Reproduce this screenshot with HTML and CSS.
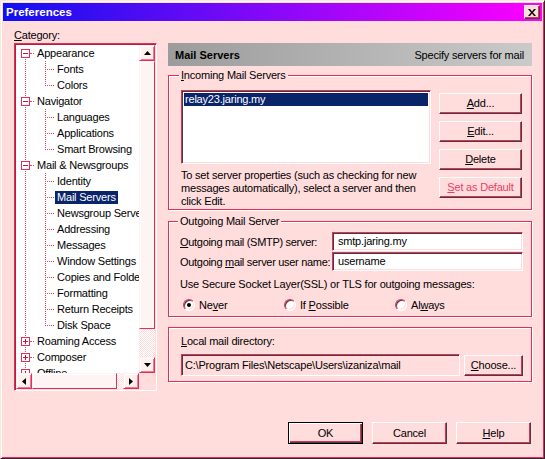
FILE: index.html
```html
<!DOCTYPE html>
<html>
<head>
<meta charset="utf-8">
<link rel="stylesheet" href="styles.css">
</head>
<body>
<div class="window">
  <div class="titlebar">
    <span class="title">Preferences</span>
    <span class="close"><svg width="8" height="7" viewBox="0 0 8 7"><path d="M0 0h2l2 2.5L6 0h2L5 3.5 8 7H6L4 4.5 2 7H0l3-3.5z" fill="#000"/></svg></span>
  </div>
  <div class="main">
    <div class="left">
      <div class="cat-label"><u>C</u>ategory:</div>
      <div class="tree">
        <div class="tree-content">
          <div class="row top"><span class="pad"></span><svg class="box" width="9" height="9"><rect x="0.5" y="0.5" width="8" height="8" fill="#fff" stroke="#e03058"/><path d="M2 4.5h5" stroke="#c01838"/></svg><span class="hl"></span><span class="label">Appearance</span></div>
          <div class="row child"><span class="indent"></span><span class="guide"></span><span class="label">Fonts</span></div>
          <div class="row child"><span class="indent"></span><span class="guide last"></span><span class="label">Colors</span></div>
          <div class="row top"><span class="pad"></span><svg class="box" width="9" height="9"><rect x="0.5" y="0.5" width="8" height="8" fill="#fff" stroke="#e03058"/><path d="M2 4.5h5" stroke="#c01838"/></svg><span class="hl"></span><span class="label">Navigator</span></div>
          <div class="row child"><span class="indent"></span><span class="guide"></span><span class="label">Languages</span></div>
          <div class="row child"><span class="indent"></span><span class="guide"></span><span class="label">Applications</span></div>
          <div class="row child"><span class="indent"></span><span class="guide last"></span><span class="label">Smart Browsing</span></div>
          <div class="row top"><span class="pad"></span><svg class="box" width="9" height="9"><rect x="0.5" y="0.5" width="8" height="8" fill="#fff" stroke="#e03058"/><path d="M2 4.5h5" stroke="#c01838"/></svg><span class="hl"></span><span class="label">Mail &amp; Newsgroups</span></div>
          <div class="row child"><span class="indent"></span><span class="guide"></span><span class="label">Identity</span></div>
          <div class="row child"><span class="indent"></span><span class="guide"></span><span class="label sel">Mail Servers</span></div>
          <div class="row child"><span class="indent"></span><span class="guide"></span><span class="label">Newsgroup Servers</span></div>
          <div class="row child"><span class="indent"></span><span class="guide"></span><span class="label">Addressing</span></div>
          <div class="row child"><span class="indent"></span><span class="guide"></span><span class="label">Messages</span></div>
          <div class="row child"><span class="indent"></span><span class="guide"></span><span class="label">Window Settings</span></div>
          <div class="row child"><span class="indent"></span><span class="guide"></span><span class="label">Copies and Folders</span></div>
          <div class="row child"><span class="indent"></span><span class="guide"></span><span class="label">Formatting</span></div>
          <div class="row child"><span class="indent"></span><span class="guide"></span><span class="label">Return Receipts</span></div>
          <div class="row child"><span class="indent"></span><span class="guide last"></span><span class="label">Disk Space</span></div>
          <div class="row top"><span class="pad"></span><svg class="box" width="9" height="9"><rect x="0.5" y="0.5" width="8" height="8" fill="#fff" stroke="#e03058"/><path d="M2 4.5h5M4.5 2v5" stroke="#c01838"/></svg><span class="hl"></span><span class="label">Roaming Access</span></div>
          <div class="row top"><span class="pad"></span><svg class="box" width="9" height="9"><rect x="0.5" y="0.5" width="8" height="8" fill="#fff" stroke="#e03058"/><path d="M2 4.5h5M4.5 2v5" stroke="#c01838"/></svg><span class="hl"></span><span class="label">Composer</span></div>
          <div class="row top"><span class="pad"></span><svg class="box" width="9" height="9"><rect x="0.5" y="0.5" width="8" height="8" fill="#fff" stroke="#e03058"/><path d="M2 4.5h5M4.5 2v5" stroke="#c01838"/></svg><span class="hl"></span><span class="label">Offline</span></div>
        </div>
        <div class="vscroll">
          <div class="sb-btn"><svg width="7" height="4"><path d="M3.5 0L7 4H0z" fill="#000"/></svg></div>
          <div class="thumb vthumb"></div>
          <div class="track"></div>
          <div class="sb-btn"><svg width="7" height="4"><path d="M0 0h7L3.5 4z" fill="#000"/></svg></div>
        </div>
        <div class="hscroll">
          <div class="sb-btn"><svg width="4" height="7"><path d="M4 0v7L0 3.5z" fill="#000"/></svg></div>
          <div class="thumb hthumb"></div>
          <div class="track"></div>
          <div class="sb-btn"><svg width="4" height="7"><path d="M0 0l4 3.5L0 7z" fill="#000"/></svg></div>
        </div>
        <div class="corner"></div>
      </div>
    </div>

    <div class="right">
      <div class="header"><span class="h-title">Mail Servers</span><span class="h-desc">Specify servers for mail</span></div>

      <div class="group incoming">
        <div class="group-title"><u>I</u>ncoming Mail Servers</div>
        <div class="inc-row">
          <div class="inc-left">
            <div class="listbox"><div class="list-item">relay23.jaring.my</div></div>
            <p class="desc">To set server properties (such as checking for new<br>messages automatically), select a server and then<br>click Edit.</p>
          </div>
          <div class="inc-buttons">
            <div class="btn"><span><u>A</u>dd...</span></div>
            <div class="btn"><span><u>E</u>dit...</span></div>
            <div class="btn"><span><u>D</u>elete</span></div>
            <div class="btn disabled"><span><u>S</u>et as Default</span></div>
          </div>
        </div>
      </div>

      <div class="group outgoing">
        <div class="group-title">Outgoing Mail Server</div>
        <div class="field-row first">
          <span class="field-label"><u>O</u>utgoing mail (SMTP) server:</span>
          <div class="input">smtp.jaring.my</div>
        </div>
        <div class="field-row">
          <span class="field-label">Outgoing <u>m</u>ail server user name:</span>
          <div class="input">username</div>
        </div>
        <div class="ssl-text">Use Secure Socket Layer(SSL) or TLS for outgoing messages:</div>
        <div class="radios">
          <div class="radio-item r1"><span class="radio checked"><span class="dot"></span></span><span>Ne<u>v</u>er</span></div>
          <div class="radio-item r2"><span class="radio"></span><span>If <u>P</u>ossible</span></div>
          <div class="radio-item r3"><span class="radio"></span><span>Al<u>w</u>ays</span></div>
        </div>
      </div>

      <div class="group local">
        <div class="local-label"><u>L</u>ocal mail directory:</div>
        <div class="local-row">
          <div class="input dir">C:\Program Files\Netscape\Users\izaniza\mail</div>
          <div class="btn choose"><span><u>C</u>hoose...</span></div>
        </div>
      </div>
    </div>
  </div>

  <div class="footer">
    <div class="btn fbtn default"><span>OK</span></div>
    <div class="btn fbtn"><span>Cancel</span></div>
    <div class="btn fbtn"><span><u>H</u>elp</span></div>
  </div>
</div>
</body>
</html>
```

FILE: styles.css
```css
* { box-sizing: border-box; }

html, body {
  margin: 0;
  padding: 0;
}

body {
  background: #ffdddd;
  font-family: "Liberation Sans", Arial, sans-serif;
  font-size: 11px;
  letter-spacing: -0.2px;
  color: #000;
  width: 545px;
  height: 459px;
  overflow: hidden;
}

u {
  text-decoration: underline;
  text-underline-offset: 1px;
}

.window {
  width: 545px;
  height: 459px;
  border: 1px solid;
  border-color: #ffe8d8 #402030 #402030 #ffe8d8;
  box-shadow: inset 1px 1px 0 #ffffff, inset -1px -1px 0 #e03058;
  padding: 2px;
  display: flex;
  flex-direction: column;
  background: #ffdddd;
}

/* Title bar */
.titlebar {
  height: 18px;
  flex: none;
  display: flex;
  align-items: center;
  padding: 0 2px 0 3px;
  background: linear-gradient(to right, #1010f0, #ff00ff);
}

.title {
  color: #fff;
  font-weight: bold;
  font-size: 11.5px;
  letter-spacing: 0;
  line-height: 13px;
}

.close {
  margin-left: auto;
  width: 16px;
  height: 14px;
  display: flex;
  align-items: center;
  justify-content: center;
  background: #ffdddd;
  border: 1px solid;
  border-color: #fff #404040 #404040 #fff;
  box-shadow: inset -1px -1px 0 #e03058;
}

/* Main */
.main {
  display: flex;
  gap: 11px;
  padding: 8px 0 0 11px;
  flex: none;
}

.left {
  width: 143px;
  flex: none;
}

.cat-label {
  line-height: 13px;
  height: 13px;
}

.tree {
  margin-top: 1px;
  width: 143px;
  height: 348px;
  border: 1px solid;
  border-color: #e03058 #ffffff #ffffff #e03058;
  box-shadow: inset 1px 1px 0 #b02040, inset -1px -1px 0 #ffdddd;
  padding: 1px;
  display: grid;
  grid-template-columns: 1fr 16px;
  grid-template-rows: 1fr 16px;
  background: #fff;
}

.tree-content {
  overflow: hidden;
  background-color: #fff;
  background-image: repeating-linear-gradient(to bottom, #e04060 0 1px, transparent 1px 2px);
  background-size: 1px calc(100% - 8px);
  background-position: 9px 8px;
  background-repeat: no-repeat;
}

.row {
  height: 16px;
  display: flex;
  align-items: center;
  white-space: nowrap;
}

.row .pad { width: 5px; flex: none; }
.row .box { flex: none; display: block; }
.row .hl {
  width: 5px;
  height: 1px;
  flex: none;
  background-image: repeating-linear-gradient(to right, #e04060 0 1px, transparent 1px 2px);
  background-position: 1px 0;
}

.row .indent { width: 29px; flex: none; }
.row .guide {
  width: 10px;
  height: 16px;
  flex: none;
  background-image:
    repeating-linear-gradient(to bottom, #e04060 0 1px, transparent 1px 2px),
    repeating-linear-gradient(to right, #e04060 0 1px, transparent 1px 2px);
  background-size: 1px 16px, 9px 1px;
  background-position: 0 0, 2px 8px;
  background-repeat: no-repeat;
}
.row .guide.last {
  background-size: 1px 9px, 9px 1px;
}

.label {
  line-height: 13px;
  padding: 0 2px;
}

.label.sel {
  background: #0a246a;
  color: #fff;
}

/* scrollbars */
.vscroll {
  display: flex;
  flex-direction: column;
  background: #ffdddd;
}

.hscroll {
  display: flex;
  flex-direction: row;
  background: #ffdddd;
}

.corner {
  background: #ffdddd;
}

.sb-btn {
  width: 16px;
  height: 16px;
  flex: none;
  display: flex;
  align-items: center;
  justify-content: center;
  background: #fff0f0;
  border: 1px solid;
  border-color: #ffeeee #e03058 #e03058 #ffeeee;
  box-shadow: inset 1px 1px 0 #ffffff, inset -1px -1px 0 #f07890;
}

.thumb {
  flex: none;
  background: #fff4f4;
  border: 1px solid;
  border-color: #fff4f4 #e03058 #e03058 #fff4f4;
  box-shadow: inset 1px 1px 0 #ffffff;
}

.vthumb { height: 268px; }
.hthumb { width: 85px; }

.track {
  flex: 1;
  background-color: #fff0f0;
  background-image: repeating-conic-gradient(#ffffff 0 25%, #ffdddd 0 50%);
  background-size: 2px 2px;
}

/* Right side */
.right {
  width: 364px;
  flex: none;
  margin-top: 14px;
}

.header {
  height: 23px;
  display: flex;
  align-items: center;
  justify-content: space-between;
  padding: 0 8px 0 7px;
  background: linear-gradient(to right, #9c9c9c, #cacaca);
}

.h-title {
  font-weight: bold;
  letter-spacing: 0;
}

.h-desc {
  color: #000;
}

.group {
  border: 1px solid #e03058;
  box-shadow: inset 1px 1px 0 #ffffff, 1px 1px 0 #ffffff;
}

.group-title {
  width: fit-content;
  margin: -7px 0 0 -2px;
  padding: 0 2px;
  line-height: 13px;
  background: #ffdddd;
}

.incoming {
  margin-top: 9px;
  padding: 0 8px 1px 12px;
}

.inc-row {
  display: flex;
  gap: 8px;
  margin-top: 8px;
}

.inc-left {
  width: 250px;
  flex: none;
}

.listbox {
  width: 250px;
  height: 74px;
  background: #fff;
  border: 1px solid;
  border-color: #e03058 #ffffff #ffffff #e03058;
  box-shadow: inset 1px 1px 0 #404040, inset -1px -1px 0 #ffdddd;
  padding: 2px 2px;
}

.list-item {
  height: 13px;
  line-height: 13px;
  padding-left: 1px;
  background: #0a246a;
  color: #fff;
  white-space: nowrap;
}

.desc {
  margin: 5px 0 0 0;
  line-height: 13px;
  white-space: nowrap;
}

.inc-buttons {
  display: flex;
  flex-direction: column;
  gap: 7px;
  padding-top: 3px;
}

.btn {
  background: #ffdddd;
  border: 1px solid;
  border-color: #ffffff #404040 #404040 #ffffff;
  box-shadow: inset -1px -1px 0 #e03058;
  display: flex;
  align-items: center;
  justify-content: center;
  line-height: 13px;
  white-space: nowrap;
}

.inc-buttons .btn {
  width: 83px;
  height: 21px;
}

.btn.disabled {
  color: #e84068;
}

.outgoing {
  margin-top: 11px;
  padding: 0 8px 3px 11px;
}

.field-row {
  display: flex;
  align-items: center;
  height: 19px;
}

.field-row.first {
  margin-top: 4px;
  margin-bottom: 1px;
}

.field-label {
  width: 152px;
  flex: none;
  line-height: 13px;
  padding-top: 2px;
  letter-spacing: -0.3px;
  white-space: nowrap;
}

.input {
  height: 19px;
  width: 191px;
  background: #fff;
  border: 1px solid;
  border-color: #e03058 #ffffff #ffffff #e03058;
  box-shadow: inset 1px 1px 0 #404040, inset -1px -1px 0 #ffdddd;
  padding: 0 0 0 5px;
  line-height: 17px;
  white-space: nowrap;
}

.ssl-text {
  margin-top: 7px;
  line-height: 13px;
  white-space: nowrap;
}

.radios {
  margin-top: 6px;
  display: flex;
  height: 16px;
  align-items: center;
  padding-left: 3px;
}

.radio-item {
  display: flex;
  align-items: center;
  gap: 4px;
  line-height: 13px;
}

.radio-item.r1 { width: 101px; }
.radio-item.r2 { width: 111px; }

.radio {
  width: 12px;
  height: 12px;
  border-radius: 50%;
  background: #fff;
  border: 1px solid;
  border-color: #e03058 #ffffff #ffffff #e03058;
  box-shadow: inset 1px 1px 0 #404040, inset -1px -1px 0 #ffdddd;
  display: flex;
  align-items: center;
  justify-content: center;
  flex: none;
}

.radio .dot {
  width: 4px;
  height: 4px;
  border-radius: 50%;
  background: #000;
}

.local {
  margin-top: 10px;
  padding: 7px 8px 5px 12px;
}

.local-label {
  line-height: 13px;
}

.local-row {
  margin-top: 6px;
  display: flex;
  align-items: center;
  gap: 4px;
}

.input.dir {
  width: 279px;
  height: 22px;
  line-height: 20px;
  padding-left: 3px;
  background: #ffdddd;
}

.btn.choose {
  width: 59px;
  height: 21px;
  margin-top: 1px;
}

/* Footer */
.footer {
  display: flex;
  justify-content: flex-end;
  gap: 9px;
  padding-right: 11px;
  margin-top: 31px;
}

.fbtn {
  width: 75px;
  height: 22px;
}

.fbtn.default {
  border: 1px solid #000;
  box-shadow: inset 1px 1px 0 #ffffff, inset -1px -1px 0 #404040, inset -2px -2px 0 #e03058;
}
```
